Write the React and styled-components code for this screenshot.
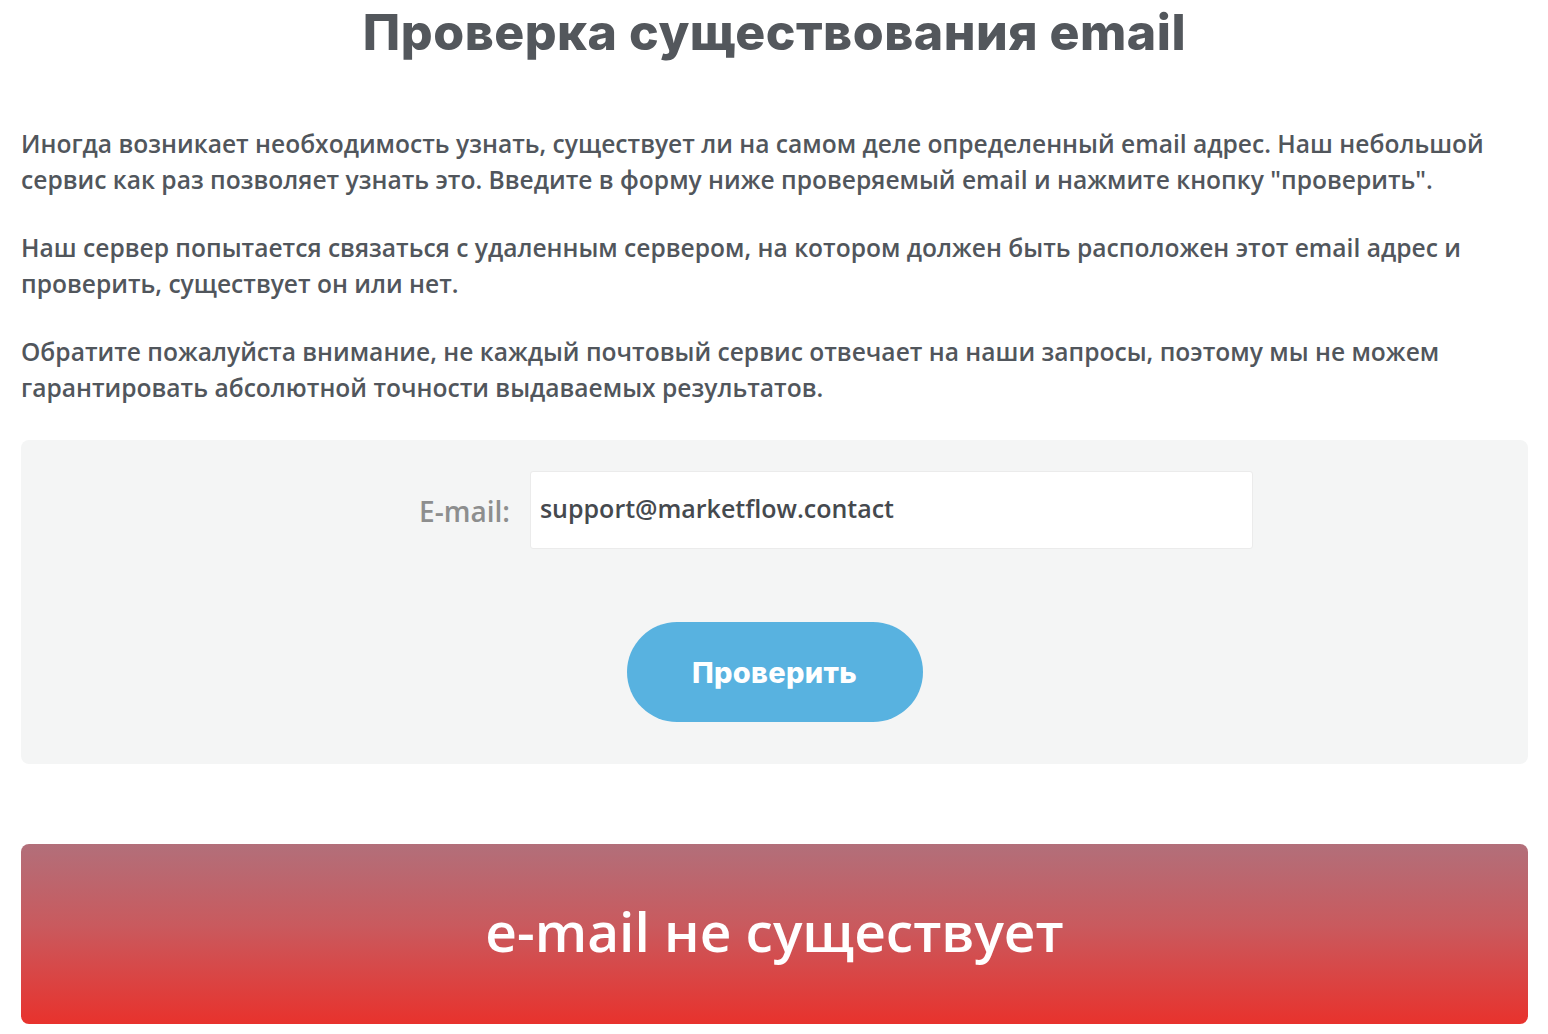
import React from "react";
import styled, { createGlobalStyle } from "styled-components";

const GlobalStyle = createGlobalStyle`
  html, body {
    margin: 0;
    padding: 0;
    background: #ffffff;
  }
  body {
    font-family: "Open Sans", "Noto Sans", sans-serif;
  }
`;

const Page = styled.div`
  padding: 0 20px 0 21px;
  width: 1507px;
`;

const Title = styled.h1`
  margin: 0;
  padding-top: 2px;
  font-family: Inter, "Open Sans", sans-serif;
  font-weight: 800;
  font-size: 50px;
  line-height: 60px;
  color: #53575c;
  text-align: center;
  letter-spacing: 0.5px;
`;

const Text = styled.p`
  margin: ${(p) => (p.first ? "64px" : "32px")} 0 0;
  font-size: 24.6px;
  line-height: 36px;
  font-weight: 600;
  color: #51565c;
`;

const FormBox = styled.form`
  margin-top: 34px;
  background: #f4f5f5;
  border-radius: 8px;
  height: 324px;
  box-sizing: border-box;
  padding-top: 31px;
  display: flex;
  flex-direction: column;
  align-items: center;
`;

const Row = styled.div`
  display: flex;
  align-items: center;
  gap: 20px;
  padding-left: 123px;
`;

const Label = styled.label`
  font-size: 28px;
  font-weight: 600;
  color: #8d8e8e;
  padding-top: 2px;
`;

const Input = styled.input`
  width: 723px;
  height: 78px;
  box-sizing: border-box;
  border: 1px solid #ebebeb;
  border-radius: 3px;
  background: #fff;
  padding: 0 9px 5px;
  font-family: "Open Sans", sans-serif;
  font-size: 25px;
  font-weight: 600;
  color: #45494e;
  outline: none;
`;

const CheckButton = styled.button`
  margin-top: 73px;
  width: 296px;
  height: 100px;
  border: none;
  border-radius: 50px;
  background: #58b2e0;
  color: #fff;
  font-family: Inter, "Open Sans", sans-serif;
  font-size: 29px;
  font-weight: 800;
  letter-spacing: 0.3px;
  cursor: pointer;
`;

const Result = styled.div`
  margin-top: 80px;
  height: 180px;
  border-radius: 8px;
  background: linear-gradient(180deg, #b26f7a 0%, #c95a5e 45%, #e8322d 100%);
  display: flex;
  align-items: center;
  justify-content: center;
  color: #fff;
  font-size: 55px;
  font-weight: 600;
  padding-bottom: 8px;
  box-sizing: border-box;
`;

export default function App() {
  return (
    <>
      <GlobalStyle />
      <Page>
        <Title>Проверка существования email</Title>
        <Text first>
          Иногда возникает необходимость узнать, существует ли на самом деле определенный email адрес. Наш небольшой
          сервис как раз позволяет узнать это. Введите в форму ниже проверяемый email и нажмите кнопку "проверить".
        </Text>
        <Text>
          Наш сервер попытается связаться с удаленным сервером, на котором должен быть расположен этот email адрес и
          проверить, существует он или нет.
        </Text>
        <Text>
          Обратите пожалуйста внимание, не каждый почтовый сервис отвечает на наши запросы, поэтому мы не можем
          гарантировать абсолютной точности выдаваемых результатов.
        </Text>
        <FormBox onSubmit={(e) => e.preventDefault()}>
          <Row>
            <Label htmlFor="email">E-mail:</Label>
            <Input id="email" type="text" defaultValue="support@marketflow.contact" />
          </Row>
          <CheckButton type="submit">Проверить</CheckButton>
        </FormBox>
        <Result>e-mail не существует</Result>
      </Page>
    </>
  );
}
